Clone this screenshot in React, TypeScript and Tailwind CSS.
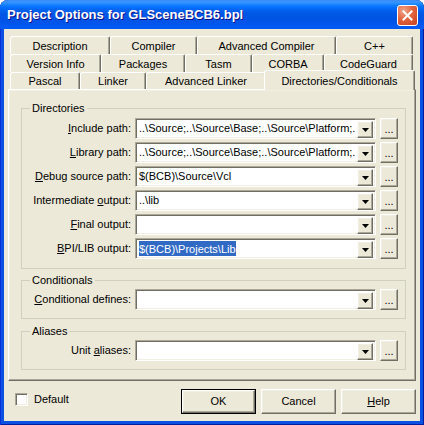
import React from 'react';

const font = "font-['Liberation_Sans',Arial,sans-serif]";

// classic 3D edges
const raised =
  'border border-t-white border-l-white border-r-[#716F64] border-b-[#716F64] shadow-[inset_-1px_-1px_0_#ACA899,inset_1px_1px_0_#F1EFE2]';
const sunken =
  'border border-t-[#ACA899] border-l-[#ACA899] border-r-white border-b-white shadow-[inset_1px_1px_0_#716F64,inset_-1px_-1px_0_#F1EFE2]';

const Tab = ({ label, w, h = 'h-[18px]' }: { label: string; w: string; h?: string }) => (
  <div
    className={`${w} ${h} shrink-0 flex items-center justify-center pt-[1px] border-t border-l border-white border-r border-r-[#716F64] rounded-tl-[3px] rounded-tr-[2px] shadow-[inset_-1px_0_0_#ACA899] text-[11px]`}
  >
    {label}
  </div>
);

const Arrow = () => (
  <svg width="7" height="4" viewBox="0 0 7 4">
    <path d="M0 0h7L3.5 4z" fill="#000" />
  </svg>
);

const Combo = ({ value, selected }: { value?: string; selected?: boolean }) => (
  <div className={`w-[241px] h-[21px] bg-white flex p-[2px] ${sunken}`}>
    <div className="flex-1 min-w-0 overflow-hidden whitespace-nowrap flex items-center pl-[1px] text-[11px]">
      {selected ? <span className="bg-[#316AC5] text-white leading-[16px]">{value}</span> : value}
    </div>
    <div className={`w-[16px] h-[17px] shrink-0 bg-[#ECE9D8] flex items-center justify-center ${raised}`}>
      <Arrow />
    </div>
  </div>
);

const Dots = () => (
  <div className={`w-[18px] h-[21px] bg-[#ECE9D8] flex items-center justify-center pt-[2px] text-[11px] ${raised}`}>...</div>
);

const Row = ({ label, value, selected }: { label: React.ReactNode; value?: string; selected?: boolean }) => (
  <>
    <div className="text-right text-[11px] leading-[21px] whitespace-nowrap">{label}</div>
    <Combo value={value} selected={selected} />
    <Dots />
  </>
);

const Group = ({ title, children, className }: { title: string; children: React.ReactNode; className: string }) => (
  <fieldset className={`border border-[#D0D0BF] ${className}`}>
    <legend className="ml-[8px] px-[2px] text-[11px] leading-[13px]">{title}</legend>
    <div className="grid grid-cols-[109px_241px_18px] gap-x-[4px] gap-y-[3px]">{children}</div>
  </fieldset>
);

const Btn = ({ children, def }: { children: React.ReactNode; def?: boolean }) => (
  <div className={`w-[75px] h-[25px] ${def ? 'border border-black' : ''}`}>
    <div className={`w-full h-full bg-[#ECE9D8] flex items-center justify-center text-[11px] ${raised}`}>{children}</div>
  </div>
);

const SRC = '..\\Source;..\\Source\\Base;..\\Source\\Platform;.';

export default function App() {
  return (
    <div className="w-[424px] h-[425px] bg-white">
      <div
        className={`w-[424px] h-[425px] flex flex-col rounded-t-[8px] overflow-hidden bg-[#0A50E2] shadow-[inset_1px_0_0_#0831D9,inset_-1px_0_0_#001EA0,inset_0_-1px_0_#001EA0] text-black ${font}`}
      >
        {/* title bar */}
        <div className="h-[29px] shrink-0 flex items-center justify-between pl-[7px] pr-[6px] bg-[linear-gradient(to_bottom,#3C8CF6_0%,#3A93FF_7%,#288EFF_12%,#127DFF_18%,#036FFC_26%,#0262EE_36%,#0057E5_48%,#0054E3_64%,#0055EB_82%,#005BF5_92%,#0058EE_100%)]">
          <span className="text-white font-bold text-[13px] [text-shadow:1px_1px_0_#0F1089]">
            Project Options for GLSceneBCB6.bpl
          </span>
          <div className="w-[21px] h-[21px] mt-[1px] rounded-[3px] border border-white flex items-center justify-center bg-[radial-gradient(circle_at_30%_25%,#F2A58C_0%,#E2653F_45%,#C5411C_100%)]">
            <svg width="11" height="11" viewBox="0 0 11 11">
              <path d="M1.5 1.5l8 8M9.5 1.5l-8 8" stroke="#fff" strokeWidth="2" strokeLinecap="square" />
            </svg>
          </div>
        </div>

        {/* client */}
        <div className="flex-1 mx-[4px] mb-[4px] bg-[#ECE9D8] flex flex-col">
          <div className="pt-[7px] pl-[6px]">
            <div className="flex">
              <Tab label="Description" w="w-[100px]" />
              <Tab label="Compiler" w="w-[87px]" />
              <Tab label="Advanced Compiler" w="w-[139px]" />
              <Tab label="C++" w="w-[77px]" />
            </div>
            <div className="flex">
              <Tab label="Version Info" w="w-[91px]" />
              <Tab label="Packages" w="w-[84px]" />
              <Tab label="Tasm" w="w-[67px]" />
              <Tab label="CORBA" w="w-[72px]" />
              <Tab label="CodeGuard" w="w-[89px]" />
            </div>
            <div className="flex h-[17px]">
              <Tab label="Pascal" w="w-[70px]" h="h-[17px]" />
              <Tab label="Linker" w="w-[66px]" h="h-[17px]" />
              <Tab label="Advanced Linker" w="w-[120px]" h="h-[17px]" />
              <div className="relative z-10 -ml-[2px] -mt-[2px] w-[151px] h-[20px] shrink-0 bg-[#ECE9D8] flex items-start justify-center pt-[2px] border-t border-l border-white border-r border-r-[#716F64] rounded-tl-[3px] rounded-tr-[2px] shadow-[inset_-1px_0_0_#ACA899] text-[11px]">
                Directories/Conditionals
              </div>
            </div>
          </div>

          {/* tab sheet */}
          <div className={`ml-[4px] w-[408px] h-[292px] shrink-0 pl-[12px] pr-[9px] flex flex-col ${raised}`}>
            <Group title="Directories" className="mt-[12px] pt-[3px] pb-[9px]">
              <Row label={<><u>I</u>nclude path:</>} value={SRC} />
              <Row label={<><u>L</u>ibrary path:</>} value={SRC} />
              <Row label={<><u>D</u>ebug source path:</>} value={'$(BCB)\\Source\\Vcl'} />
              <Row label={<>Intermediate <u>o</u>utput:</>} value={'..\\lib'} />
              <Row label={<><u>F</u>inal output:</>} />
              <Row label={<><u>B</u>PI/LIB output:</>} value={'$(BCB)\\Projects\\Lib'} selected />
            </Group>
            <Group title="Conditionals" className="mt-[5px] pt-[2px] pb-[8px]">
              <Row label={<><u>C</u>onditional defines:</>} />
            </Group>
            <Group title="Aliases" className="mt-[6px] pt-[2px] pb-[8px]">
              <Row label={<>Unit <u>a</u>liases:</>} />
            </Group>
          </div>

          {/* bottom bar */}
          <div className="flex-1 flex items-start">
            <div className={`ml-[11px] mt-[12px] w-[13px] h-[13px] bg-white ${sunken}`} />
            <span className="ml-[6px] mt-[12px] text-[11px] leading-[13px]">Default</span>
            <div className="ml-auto mr-[4px] mt-[8px] flex gap-[5px]">
              <Btn def>OK</Btn>
              <Btn>Cancel</Btn>
              <Btn>
                <span>
                  <u>H</u>elp
                </span>
              </Btn>
            </div>
          </div>
        </div>
      </div>
    </div>
  );
}
